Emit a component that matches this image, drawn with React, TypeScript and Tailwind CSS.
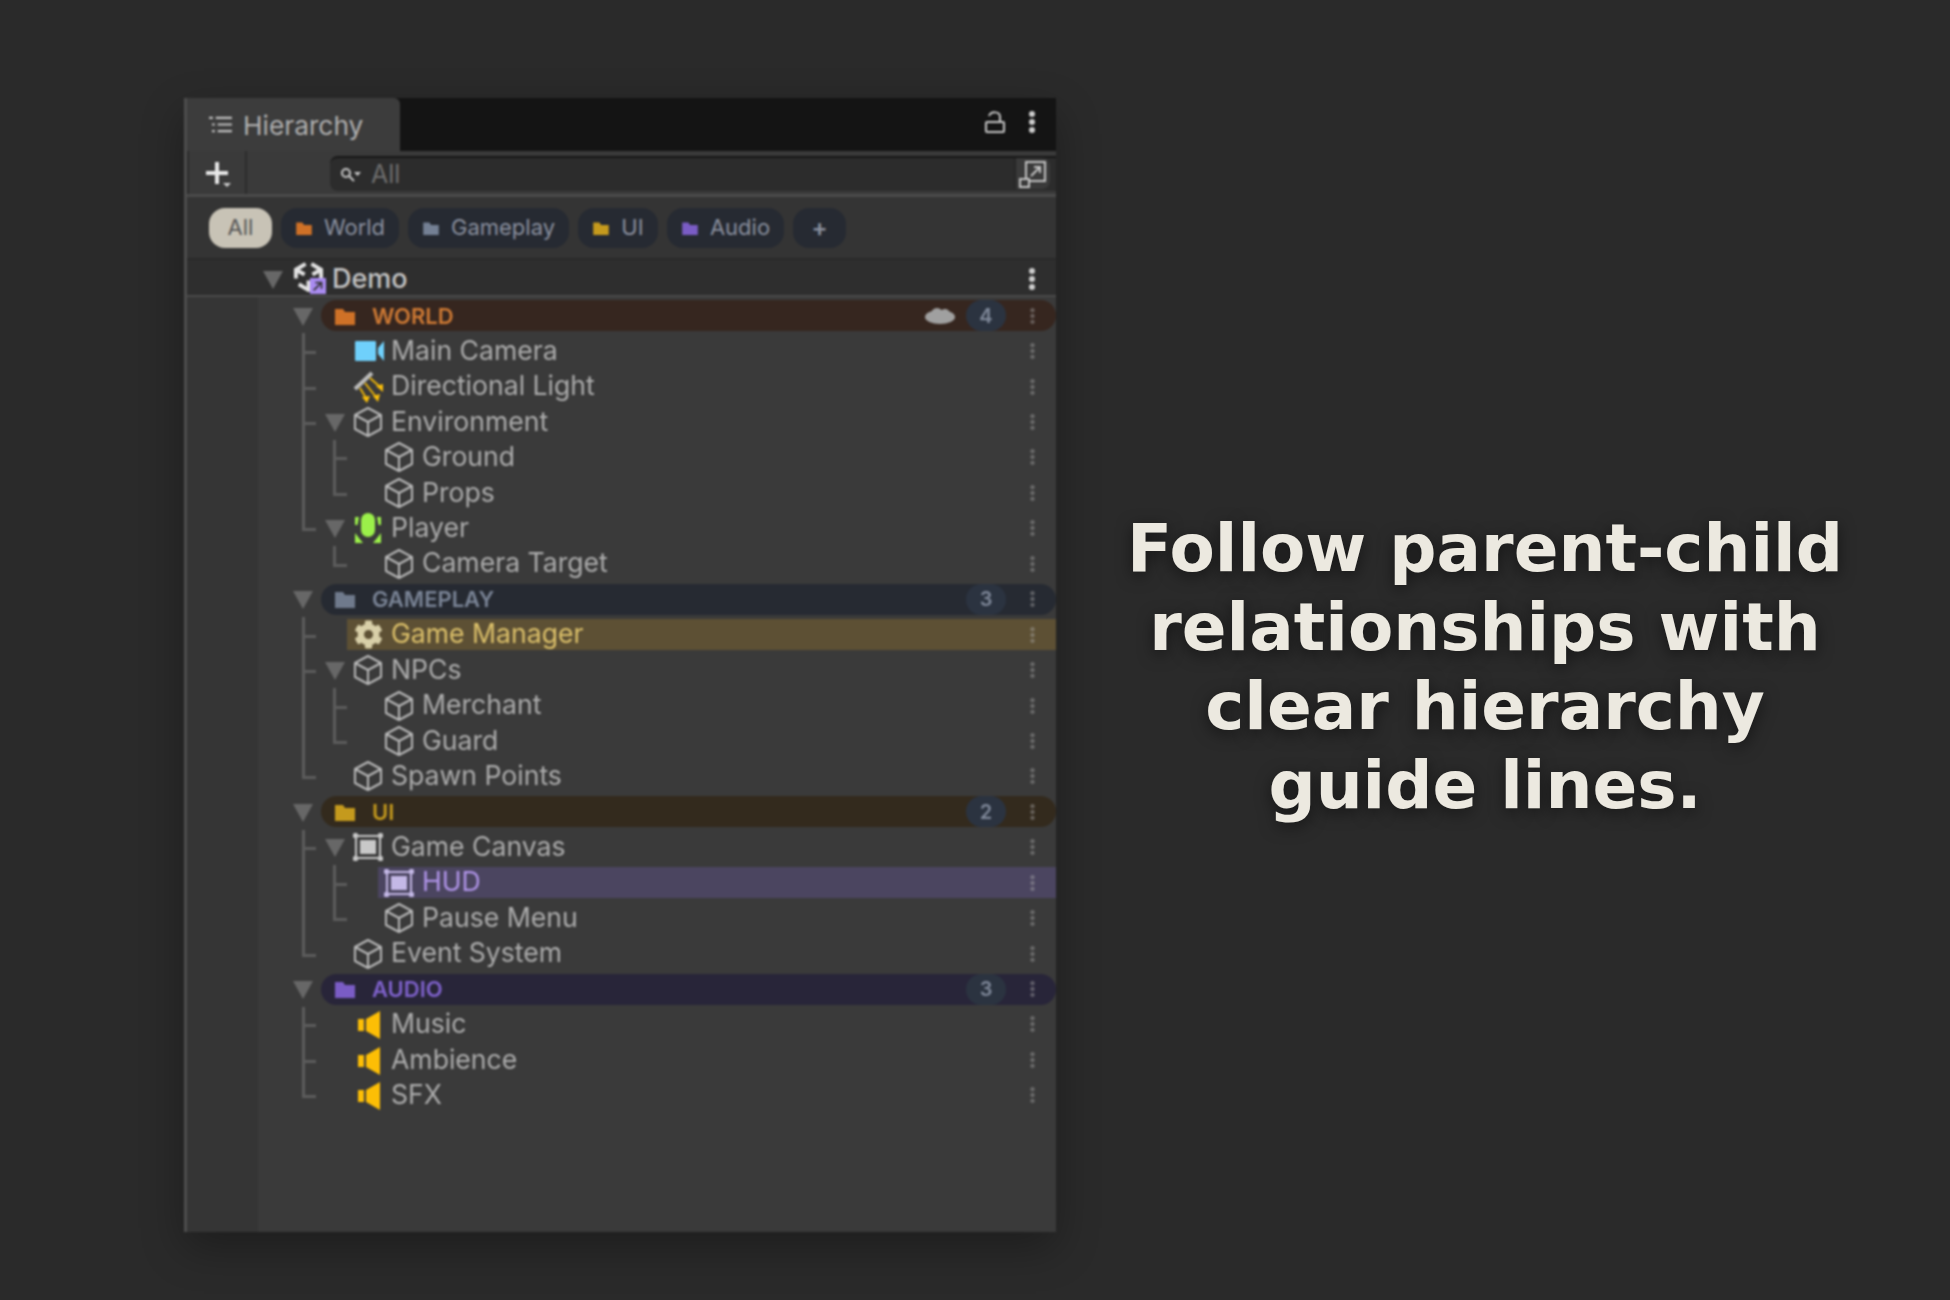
import React from "react";
import { FaCog } from "react-icons/fa";

const Cube = () => (
  <svg viewBox="0 0 32 32" className="h-[34px] w-[34px]" fill="none" stroke="#b8b8b8" strokeWidth="2" strokeLinejoin="round">
    <path d="M16 2 L29 9 V23 L16 30 L3 23 V9 Z" />
    <path d="M3 9 L16 16 L29 9 M16 16 V30" />
  </svg>
);
const Camera = () => (
  <svg viewBox="0 0 32 32" className="h-[32px] w-[32px]">
    <rect x="3" y="6" width="21" height="20" rx="1" fill="#6fd0fb" />
    <path d="M26 13 L32 6 V26 L26 19 Z" fill="#6fd0fb" />
  </svg>
);
const LightIcon = () => (
  <svg viewBox="0 0 32 32" className="h-[32px] w-[32px]" fill="none">
    <path d="M3 18 L20 2" stroke="#bcbcbc" strokeWidth="4" />
    <path d="M8 17 L14 27 M13 12 L24 26 M18 7 L27 15" stroke="#eab308" strokeWidth="2" />
    <path d="M10 26 L18 25 L15 32 Z M21 25 L28 23 L26 31 Z M24 15 L31 13 L31 21 Z" fill="#fbbf0a" />
  </svg>
);
const PlayerIcon = () => (
  <svg viewBox="0 0 32 32" className="h-[32px] w-[32px]" fill="#9bf04a">
    <rect x="9" y="1" width="14" height="24" rx="7" />
    <path d="M3 5 H7 L5.500 13 H3 Z M29 5 H25 L26.500 13 H29 Z" />
    <path d="M3 31 V21 L11 31 Z M29 31 V21 L21 31 Z" />
  </svg>
);
const CanvasIcon = ({ c, fill }: { c: string; fill: string }) => (
  <svg viewBox="0 0 32 32" className="h-[32px] w-[32px]">
    <rect x="4" y="5" width="24" height="22" fill="none" stroke={c} strokeWidth="2" />
    <rect x="8" y="9" width="16" height="14" fill={fill} />
    <rect x="1" y="2" width="5" height="5" rx="1.500" fill={c} />
    <rect x="26" y="2" width="5" height="5" rx="1.500" fill={c} />
    <rect x="1" y="25" width="5" height="5" rx="1.500" fill={c} />
    <rect x="26" y="25" width="5" height="5" rx="1.500" fill={c} />
  </svg>
);
const Speaker = () => (
  <svg viewBox="0 0 32 32" className="h-[32px] w-[32px]" fill="#fdbe05">
    <rect x="6" y="11" width="6" height="12" />
    <path d="M14 11 L28 3 V31 L14 23 Z" />
  </svg>
);
const Folder = ({ c, size }: { c: string; size: "lg" | "sm" }) => (
  <svg viewBox="0 0 20 18" className={size === "lg" ? "h-[18px] w-[20px]" : "h-[14px] w-[18px]"}>
    <path fill={c} d="M0 2 H8 L10 5 H20 V18 H0 Z" />
  </svg>
);
const Tri = () => <span className="mt-[2px] h-0 w-0 border-x-[10px] border-t-[18px] border-x-transparent border-t-[#676767]" />;
const Dots = ({ dim }: { dim?: boolean }) => (
  <svg viewBox="0 0 6 22" className={dim ? "h-[16px] w-[5px] opacity-40" : "h-[22px] w-[6px]"} fill={dim ? "#b5b5b5" : "#cfcfcf"}>
    <circle cx="3" cy="3" r="3" />
    <circle cx="3" cy="11" r="3" />
    <circle cx="3" cy="19" r="3" />
  </svg>
);
const UnityIcon = () => (
  <span className="relative h-[34px] w-[33px]">
    <svg viewBox="0 0 32 32" className="h-[31px] w-[31px]" fill="none" stroke="#e2e2e2" strokeWidth="4">
      <path d="M13 3 L3 9 V18" />
      <path d="M19 3 L29 9 V18" />
      <path d="M6 24 L16 30 L26 24" />
      <path d="M3 9 L12 14 M29 9 L20 14 M16 30 V20" />
    </svg>
    <span className="absolute top-[17px] left-[17px] flex h-[16px] w-[16px] items-center justify-center bg-[#a98bf0]">
      <svg viewBox="0 0 16 16" className="h-[14px] w-[14px]" fill="none" stroke="#333" strokeWidth="2">
        <path d="M3 13 L12 4 M5 4 H12 V11" />
      </svg>
    </span>
  </span>
);

type Gd = "tee" | "end" | "pass";
const Guide = ({ col, kind }: { col: 0 | 1; kind: Gd }) => (
  <>
    <span
      className={
        (col === 0 ? "left-[44px] " : "left-[75px] ") +
        "absolute top-0 w-[3px] bg-[#5c5c5c] " +
        (kind === "end" ? "h-1/2" : "h-full")
      }
    />
    {kind !== "pass" && (
      <span className={(col === 0 ? "left-[44px] " : "left-[75px] ") + "absolute top-1/2 h-[3px] w-[14px] bg-[#5c5c5c]"} />
    )}
  </>
);

type ItemP = {
  name: string;
  icon: React.ReactNode;
  level: 1 | 2;
  open?: boolean;
  a?: Gd;
  b?: Gd;
  hl?: "yellow" | "purple";
};
const Item = ({ name, icon, level, open, a, b, hl }: ItemP) => (
  <div className="relative flex h-[35.45px] items-center">
    {a && <Guide col={0} kind={a} />}
    {b && <Guide col={1} kind={b} />}
    <div className={(level === 1 ? "w-[89px] " : "w-[120px] ") + "flex shrink-0 justify-end pr-[2px]"}>{open && <Tri />}</div>
    <div
      className={
        "flex h-[31px] flex-1 items-center pl-[5px] " +
        (hl === "yellow" ? "bg-[#5d5034] " : hl === "purple" ? "bg-[#4b4560] " : "")
      }
    >
      <span className="flex w-[32px] justify-center">{icon}</span>
      <span
        className={
          "mb-[2px] ml-[7px] text-[26.6px] leading-none " +
          (hl === "yellow" ? "text-[#dcc06a]" : hl === "purple" ? "text-[#b094e8]" : "text-[#acacac]")
        }
      >
        {name}
      </span>
      <span className="mr-[21px] ml-auto flex">
        <Dots dim />
      </span>
    </div>
  </div>
);

const Group = ({ name, c, tc, bg, count, cloud }: { name: string; c: string; tc: string; bg: string; count: string; cloud?: boolean }) => (
  <div className="flex h-[35.45px] items-center">
    <div className="flex w-[63px] shrink-0 pl-[35px]">
      <Tri />
    </div>
    <div className={"flex h-[31px] flex-1 items-center rounded-[15.5px] pl-[14px] " + bg}>
      <Folder c={c} size="lg" />
      <span className="ml-[17px] text-[22px] leading-none font-semibold" style={{ color: tc }}>
        {name}
      </span>
      {cloud && (
        <svg viewBox="0 0 30 18" className="ml-auto h-[18px] w-[30px]" fill="#a0a0a0">
          <ellipse cx="15" cy="10" rx="15" ry="7" />
          <circle cx="12" cy="7" r="6" />
          <circle cx="20" cy="7" r="5" />
        </svg>
      )}
      <span
        className={
          (cloud ? "ml-[11px]" : "ml-auto") +
          " flex h-[31px] w-[40px] items-center justify-center rounded-full bg-[#2b3340] text-[20px] font-semibold text-[#7f8899]"
        }
      >
        {count}
      </span>
      <span className="mr-[21px] ml-[24px] flex">
        <Dots dim />
      </span>
    </div>
  </div>
);

const Chip = ({ label, c, w }: { label: string; c: string; w: string }) => (
  <span className={"flex h-[40px] items-center justify-center gap-[11px] rounded-[16px] bg-[#262a32] text-[22px] text-[#8a909f] " + w}>
    <Folder c={c} size="sm" />
    {label}
  </span>
);

export default function App() {
  return (
    <div
      className="flex h-[1300px] w-[1950px] items-start bg-[#2a2a2a] pt-[98px] pl-[184px]"
      style={{ fontFamily: "Inter, 'Noto Sans', sans-serif" }}
    >
      <div className="flex h-[1134px] w-[872px] shrink-0 flex-col overflow-hidden border-l-[3px] border-[#4d4d4d] bg-[#3a3a3a] shadow-[0_16px_40px_rgba(0,0,0,0.3)] blur-[0.9px]">
        {/* tab bar */}
        <div className="flex h-[53px] shrink-0 items-stretch bg-[#141414]">
          <div className="flex w-[213px] items-center gap-[10px] rounded-tr-[6px] bg-[#3c3c3c] pl-[21px]">
            <svg viewBox="0 0 24 20" className="h-[19px] w-[25px]" fill="none" stroke="#c0c0c0" strokeWidth="2.200">
              <path d="M7 3 H24 M9 10 H24 M9 17 H24" />
              <path d="M0 3 H4 M3 10 H6 M3 17 H6" />
            </svg>
            <span className="pt-[4px] text-[26.3px] leading-none text-[#b0b0b0]">Hierarchy</span>
          </div>
          <div className="ml-auto flex items-center gap-[24px] pr-[21px] pb-[6px]">
            <svg viewBox="0 0 20 22" className="h-[22px] w-[20px]" fill="none" stroke="#c8c8c8" strokeWidth="2">
              <rect x="1" y="11" width="18" height="10" rx="1" />
              <path d="M4 5 C6 0 15 0 15 6 V11" />
            </svg>
            <Dots />
          </div>
        </div>
        {/* toolbar */}
        <div className="flex h-[46px] shrink-0 items-stretch border-b-[3px] border-[#4a4a4a] bg-[#3a3a3a]">
          <div className="flex w-[60px] items-center justify-center border-x-[2px] border-[#2c2c2c] pt-[4px] pl-[4px]">
            <svg viewBox="0 0 30 28" className="h-[28px] w-[30px]">
              <path d="M11 1 H15 V10 H24 V14 H15 V23 H11 V14 H2 V10 H11 Z" fill="#e8e8e8" />
              <path d="M19 22 H27 L23 26 Z" fill="#d0d0d0" />
            </svg>
          </div>
          <div className="mt-[5px] ml-[83px] flex h-[35px] flex-1 items-center rounded-l-[8px] border-t-[2px] border-[#161616] bg-[#2c2c2c] pl-[10px]">
            <svg viewBox="0 0 22 16" className="h-[16px] w-[22px]" fill="none" stroke="#c8c8c8" strokeWidth="2">
              <circle cx="6" cy="6" r="4" />
              <path d="M9 9 L14 14" />
              <path d="M14 5 H21 L17.500 9 Z" fill="#c8c8c8" stroke="none" />
            </svg>
            <span className="ml-[9px] text-[25px] leading-none text-[#6e6e6e]">All</span>
            <span className="mr-[6px] mb-[2px] ml-auto flex h-[31px] w-[36px] items-center justify-center rounded-r-[8px] border-l-[2px] border-[#262626] bg-[#3a3a3a]">
              <svg viewBox="0 0 28 28" className="h-[28px] w-[28px]" fill="none" stroke="#c4c4c4" strokeWidth="2">
                <path d="M7 18 V2 H26 V21 H11" />
                <path d="M12 16 L21 7 M15 7 H21 V13" />
                <rect x="1" y="19" width="9" height="8" />
              </svg>
            </span>
          </div>
        </div>
        {/* filters */}
        <div className="flex h-[63px] shrink-0 items-center gap-[9px] border-b-[2px] border-[#292929] bg-[#343434] pl-[22px]">
          <span className="flex h-[40px] w-[63px] items-center justify-center rounded-[16px] bg-[#c8c3b6] text-[22px] text-[#575757]">All</span>
          <Chip label="World" c="#cf7127" w="w-[118px]" />
          <Chip label="Gameplay" c="#748094" w="w-[161px]" />
          <Chip label="UI" c="#c59a1d" w="w-[80px]" />
          <Chip label="Audio" c="#7a5cc5" w="w-[117px]" />
          <span className="flex h-[40px] w-[53px] items-center justify-center rounded-[16px] bg-[#262a32] text-[24px] font-semibold text-[#8a909f]">+</span>
        </div>
        {/* scene row */}
        <div className="flex h-[37px] shrink-0 items-center border-b-[2px] border-[#4a4a4a] bg-[#2e2e2e] pt-[1px]">
          <span className="ml-[76px] flex pt-[2px]">
            <Tri />
          </span>
          <span className="ml-[10px] flex">
            <UnityIcon />
          </span>
          <span className="ml-[6px] text-[27px] leading-none font-medium text-[#c4c4c4]">Demo</span>
          <span className="mr-[21px] ml-auto flex pt-[2px]">
            <Dots />
          </span>
        </div>
        {/* tree */}
        <div className="flex flex-1">
          <div className="w-[71px] shrink-0 bg-[#353535]" />
          <div className="flex-1 pt-[1px]">
            <Group name="WORLD" c="#cf7127" tc="#cf7a34" bg="bg-[#36261f]" count="4" cloud />
            <Item level={1} a="tee" name="Main Camera" icon={<Camera />} />
            <Item level={1} a="tee" name="Directional Light" icon={<LightIcon />} />
            <Item level={1} a="tee" open name="Environment" icon={<Cube />} />
            <Item level={2} a="pass" b="tee" name="Ground" icon={<Cube />} />
            <Item level={2} a="pass" b="end" name="Props" icon={<Cube />} />
            <Item level={1} a="end" open name="Player" icon={<PlayerIcon />} />
            <Item level={2} b="end" name="Camera Target" icon={<Cube />} />
            <Group name="GAMEPLAY" c="#6f7a8c" tc="#7a8496" bg="bg-[#262a32]" count="3" />
            <Item level={1} a="tee" hl="yellow" name="Game Manager" icon={<FaCog size={29} color="#d8cfa8" />} />
            <Item level={1} a="tee" open name="NPCs" icon={<Cube />} />
            <Item level={2} a="pass" b="tee" name="Merchant" icon={<Cube />} />
            <Item level={2} a="pass" b="end" name="Guard" icon={<Cube />} />
            <Item level={1} a="end" name="Spawn Points" icon={<Cube />} />
            <Group name="UI" c="#c59a1d" tc="#c59a1d" bg="bg-[#332a1d]" count="2" />
            <Item level={1} a="tee" open name="Game Canvas" icon={<CanvasIcon c="#c8c8c8" fill="#c8c8c8" />} />
            <Item level={2} a="pass" b="tee" hl="purple" name="HUD" icon={<CanvasIcon c="#c4b8e6" fill="#c4b8e6" />} />
            <Item level={2} a="pass" b="end" name="Pause Menu" icon={<Cube />} />
            <Item level={1} a="end" name="Event System" icon={<Cube />} />
            <Group name="AUDIO" c="#7a5cc5" tc="#7f62cc" bg="bg-[#282539]" count="3" />
            <Item level={1} a="tee" name="Music" icon={<Speaker />} />
            <Item level={1} a="tee" name="Ambience" icon={<Speaker />} />
            <Item level={1} a="end" name="SFX" icon={<Speaker />} />
          </div>
        </div>
      </div>
      <div className="flex h-[1135px] flex-1 items-center justify-center pt-[3px] pr-[36px]">
        <p
          className="w-[760px] text-center text-[66px] leading-[79px] font-bold text-[#ece9e0] [text-shadow:0_4px_16px_rgba(0,0,0,0.5)]"
          style={{ fontFamily: "'DejaVu Sans', sans-serif" }}
        >
          Follow parent-child relationships with clear hierarchy guide lines.
        </p>
      </div>
    </div>
  );
}
